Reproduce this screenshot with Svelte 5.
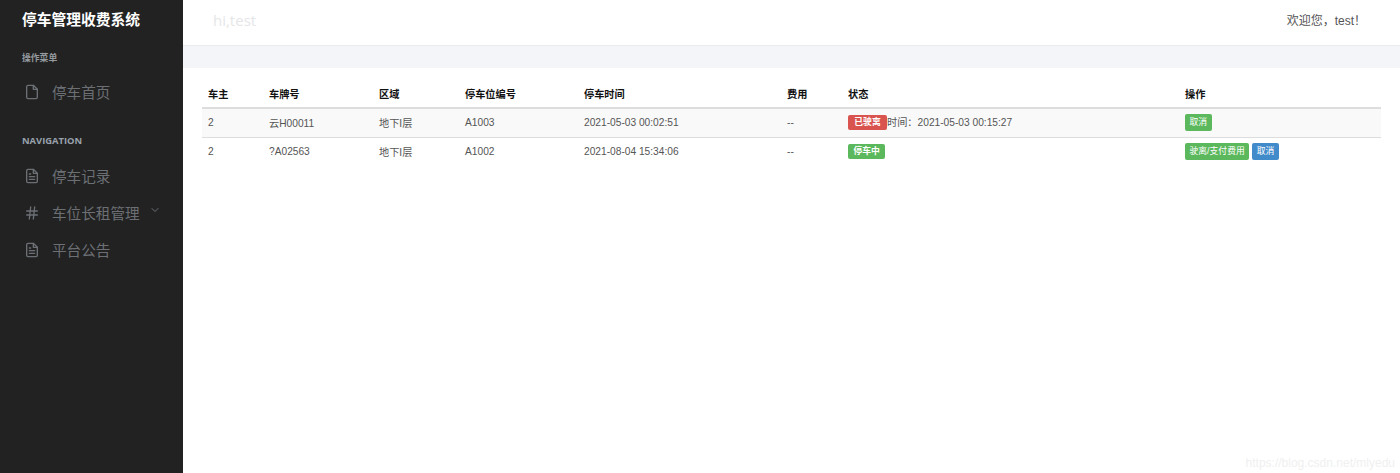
<script lang="ts">
  const columns = ['车主', '车牌号', '区域', '停车位编号', '停车时间', '费用', '状态', '操作'];

  const rows = [
    {
      owner: '2', plate: '云H00011', area: '地下I层', slot: 'A1003', time: '2021-05-03 00:02:51', fee: '--',
      status: { label: '已驶离', color: 'red' }, leftAt: '时间：2021-05-03 00:15:27',
      actions: [{ label: '取消', color: 'green' }],
    },
    {
      owner: '2', plate: '?A02563', area: '地下I层', slot: 'A1002', time: '2021-08-04 15:34:06', fee: '--',
      status: { label: '停车中', color: 'green' }, leftAt: '',
      actions: [{ label: '驶离/支付费用', color: 'green' }, { label: '取消', color: 'blue' }],
    },
  ];
</script>

{#snippet icon(kind)}
  <svg class="icon" viewBox="0 0 24 24" fill="none" stroke="currentColor" stroke-width="2" stroke-linecap="round" stroke-linejoin="round">
    {#if kind === 'hash'}
      <path d="M4 9h16M4 15h16M10 3 8 21M16 3l-2 18" />
    {:else}
      <path d="M14 2H6a2 2 0 0 0-2 2v16a2 2 0 0 0 2 2h12a2 2 0 0 0 2-2V8z" />
      <path d="M14 2v6h6" />
      {#if kind === 'text'}
        <path d="M16 13H8M16 17H8M10 9H8" />
      {/if}
    {/if}
  </svg>
{/snippet}

<div class="layout">
  <aside class="sidebar">
    <div class="brand">停车管理收费系统</div>
    <div class="section first">操作菜单</div>
    <a class="item home">{@render icon('file')}<span>停车首页</span></a>
    <div class="section nav">NAVIGATION</div>
    <a class="item">{@render icon('text')}<span>停车记录</span></a>
    <a class="item">
      {@render icon('hash')}<span>车位长租管理</span>
      <svg class="chevron" viewBox="0 0 24 24" fill="none" stroke="currentColor" stroke-width="2" stroke-linecap="round" stroke-linejoin="round"><path d="m6 9 6 6 6-6" /></svg>
    </a>
    <a class="item">{@render icon('text')}<span>平台公告</span></a>
  </aside>

  <main class="main">
    <header class="topbar">
      <span class="hi">hi,test</span>
      <span class="welcome">欢迎您，test！</span>
    </header>
    <div class="band"></div>
    <div class="content">
      <table>
        <colgroup>
          <col style="width: 61px" /><col style="width: 110px" /><col style="width: 86px" /><col style="width: 119px" />
          <col style="width: 203px" /><col style="width: 61px" /><col style="width: 337px" /><col style="width: 202px" />
        </colgroup>
        <thead>
          <tr>
            {#each columns as column}
              <th>{column}</th>
            {/each}
          </tr>
        </thead>
        <tbody>
          {#each rows as row, i}
            <tr class:striped={i === 0}>
              <td>{row.owner}</td>
              <td>{row.plate}</td>
              <td>{row.area}</td>
              <td>{row.slot}</td>
              <td>{row.time}</td>
              <td>{row.fee}</td>
              <td><span class="label {row.status.color}" class:wide={row.leftAt}>{row.status.label}</span>{row.leftAt}</td>
              <td class="actions">
                {#each row.actions as action}
                  <span class="label btn {action.color}">{action.label}</span>
                {/each}
              </td>
            </tr>
          {/each}
        </tbody>
      </table>
    </div>
    <div class="watermark">https://blog.csdn.net/mlyedu</div>
  </main>
</div>

<style>
  :global(body) {
    margin: 0;
    background: #fff;
  }

  .layout {
    display: flex;
    height: 473px;
    overflow: hidden;
    font-family: "Liberation Sans", "Noto Sans CJK SC", sans-serif;
  }

  .sidebar {
    width: 183px;
    flex: none;
    background: #222;
    color: #6c7075;
    padding: 10px 0 0 22px;
    box-sizing: border-box;
    font-family: "Open Sans", "Noto Sans CJK SC", sans-serif;
  }

  .brand {
    color: #fff;
    font-size: 14.75px;
    font-weight: 700;
    line-height: 18px;
  }

  .section {
    color: #959a9f;
    font-size: 8.8px;
    font-weight: 700;
    line-height: 12px;
  }

  .section.first {
    margin-top: 24px;
  }

  .section.nav {
    margin-top: 25px;
    margin-bottom: 10px;
    font-size: 9.4px;
    color: #98a1ac;
  }

  .item {
    display: flex;
    align-items: center;
    height: 37px;
    font-size: 14.6px;
  }

  .item.home {
    margin-top: 9px;
  }

  .icon {
    width: 16px;
    height: 16px;
    margin-left: 2px;
    margin-right: 12px;
    flex: none;
  }

  .chevron {
    width: 12px;
    height: 12px;
    margin-left: 9px;
    margin-top: -5px;
  }

  .main {
    flex: 1;
    position: relative;
    min-width: 0;
  }

  .topbar {
    display: flex;
    justify-content: space-between;
    align-items: center;
    height: 46px;
    box-sizing: border-box;
    padding: 0 34px 6px 30px;
    border-bottom: 1px solid #e9ebee;
  }

  .hi {
    color: #e5e6e8;
    font-size: 15px;
    font-family: "Open Sans", sans-serif;
  }

  .welcome {
    color: #555;
    font-size: 12px;
  }

  .band {
    height: 22px;
    background: #f4f5f8;
  }

  .content {
    padding: 18px 19px 0;
  }

  table {
    width: 1179px;
    table-layout: fixed;
    border-collapse: collapse;
    font-size: 10.2px;
    color: #555;
  }

  th {
    height: 15px;
    padding: 0 6px 6px;
    text-align: left;
    color: #111;
    font-weight: 700;
    border-bottom: 2px solid #ddd;
  }

  td {
    height: 26px;
    padding: 0 6px 2px;
    border-bottom: 1px solid #ddd;
  }

  tbody tr:last-child td {
    border-bottom: 0;
  }

  .striped {
    background: #f9f9f9;
  }

  .label {
    display: inline-block;
    padding: 0 5.5px;
    height: 15px;
    line-height: 15px;
    border-radius: 2px;
    color: #fff;
    font-size: 8.8px;
    font-weight: 700;
    vertical-align: middle;
  }

  .label.wide {
    width: 39px;
    box-sizing: border-box;
    text-align: center;
    padding: 0;
  }

  .btn {
    padding: 0 4.5px;
    height: 17px;
    line-height: 17px;
    font-weight: 400;
    margin-right: 3px;
  }

  .red {
    background: #d9534f;
  }

  .green {
    background: #5cb85c;
  }

  .blue {
    background: #428bca;
  }

  .watermark {
    position: absolute;
    right: 5px;
    bottom: 3px;
    color: #f0f0f0;
    font-size: 12px;
  }
</style>
